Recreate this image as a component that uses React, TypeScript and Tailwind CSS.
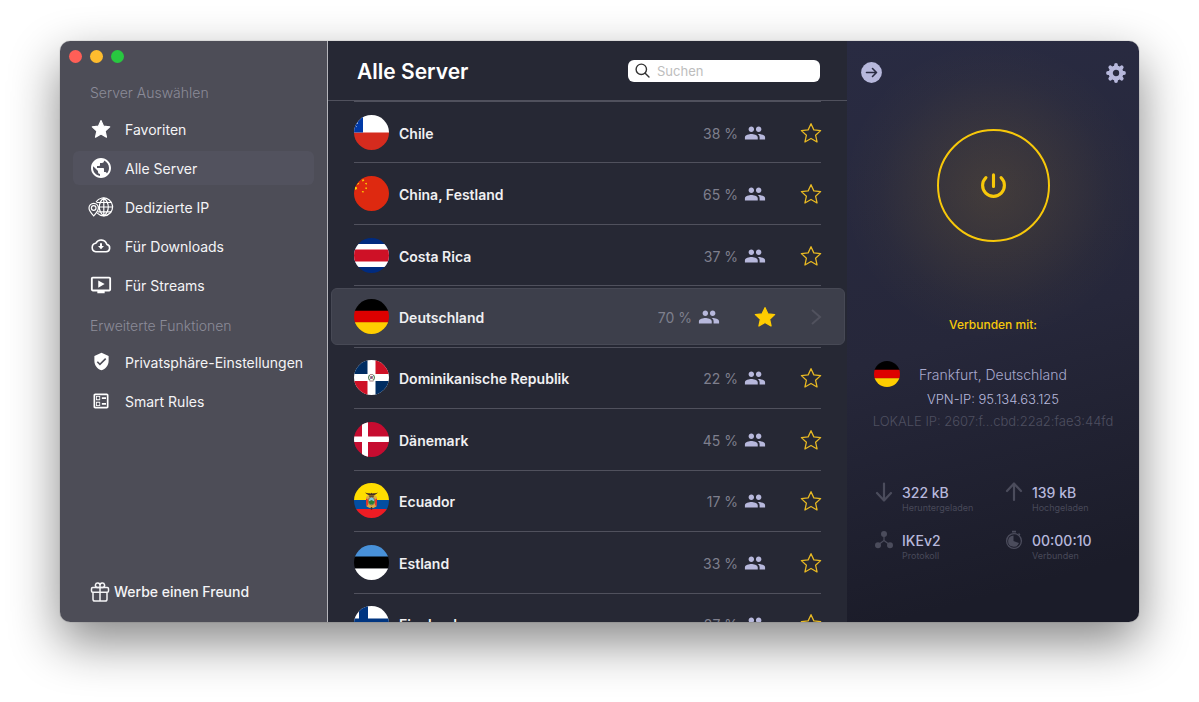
import React, { useState } from 'react';
import { MdGroup, MdOndemandVideo, MdOutlineBallot, MdPublic, MdVerifiedUser } from 'react-icons/md';

interface Server {
  id: string;
  name: string;
  load: number;
}

const SERVERS: Server[] = [
  { id: 'cl', name: 'Chile', load: 38 },
  { id: 'cn', name: 'China, Festland', load: 65 },
  { id: 'cr', name: 'Costa Rica', load: 37 },
  { id: 'de', name: 'Deutschland', load: 70 },
  { id: 'do', name: 'Dominikanische Republik', load: 22 },
  { id: 'dk', name: 'Dänemark', load: 45 },
  { id: 'ec', name: 'Ecuador', load: 17 },
  { id: 'ee', name: 'Estland', load: 33 },
  { id: 'fi', name: 'Finnland', load: 27 },
];

const STAR = 'M12 1.8l3.1 6.8 7.4.8-5.5 5 1.6 7.4-6.6-3.8-6.6 3.8 1.6-7.4-5.5-5 7.4-.8z';

const Star = ({ filled, className }: { filled?: boolean; className: string }) => (
  <svg
    className={className}
    viewBox="0 0 24 24"
    fill={filled ? 'currentColor' : 'none'}
    stroke="currentColor"
    strokeWidth="1.4"
    strokeLinejoin="round"
  >
    <path d={STAR} />
  </svg>
);

/* Sidebar icons */

const DedicatedIcon = () => (
  <svg className="w-[26px] h-[20px]" viewBox="0 0 26 20" fill="none" stroke="currentColor" strokeWidth="1.2">
    <path d="M8 5a9 9 0 1 1 1.2 11.2" />
    <path d="M15.8 1c-6 5-6 13 0 18M15.8 1c6 5 6 13 0 18M15.8 1v18M10 10h15M8.5 5.5h15M9.5 14.8h14" />
    <path d="M5.7 18.8C3.5 16.5 1 14 1 11a4.7 4.7 0 0 1 9.4 0c0 3-2.5 5.5-4.7 7.8z" />
    <circle cx="5.7" cy="11" r="2.3" />
  </svg>
);

const CloudIcon = () => (
  <svg className="w-5 h-5" viewBox="0 0 20 20" fill="none" stroke="currentColor" strokeWidth="1.6" strokeLinejoin="round">
    <path d="M4.800 15.700h10.300a3.700 3.700 0 0 0 .7-7.300A5.900 5.900 0 0 0 4.900 7.200a4.300 4.300 0 0 0-.1 8.500z" />
    <path d="M10 7.200v4" strokeWidth="2" />
    <path d="M7 10h6l-3 3.300z" fill="currentColor" stroke="none" />
  </svg>
);

const GiftIcon = () => (
  <svg className="w-5 h-5" viewBox="0 0 20 20" fill="none" stroke="currentColor" strokeWidth="1.5" strokeLinejoin="round">
    <rect x="1.5" y="5.5" width="17" height="4.7" rx="1.2" />
    <path d="M3 10.200v7a1.800 1.800 0 0 0 1.800 1.800h10.400a1.800 1.800 0 0 0 1.800-1.800v-7M10 5.500V19" />
    <path d="M10 5.500H7A2.300 2.300 0 1 1 10 3.200zM10 5.500h3a2.300 2.300 0 1 0-3-2.300z" />
  </svg>
);

/* Flags, drawn on a 35x35 canvas and clipped to a circle by the wrapper */

const FLAGS: Record<string, React.ReactNode> = {
  cl: (
    <>
      <path fill="#fff" d="M0 0h35v18H0z" />
      <path fill="#d52b1e" d="M0 17.500h35V35H0z" />
      <path fill="#0039a6" d="M0 0h9v17.500H0z" />
      <path fill="#fff" d="M1 11l1 .8L3 11l-.4 1.200zM3 7.500l1.200.6-1 .8z" />
    </>
  ),
  cn: (
    <>
      <path fill="#de2910" d="M0 0h35v35H0z" />
      <g fill="#ffde00">
        <path d="M1 10.500l1 .7 1-.4-.3 1.200.6 1.200H2l-1 .8zM3.300 7.800l2-1.300-.3 1.200-1.500 1.300z" />
        <path d="M7.700 3.400l1 .4.8-.8.200 1.300.8.5-1 .3-.8.7-.3-1zM11 7.300l1.400-.6.6 1-.8 1zM11 12l1.300-.7.8 1-1 1zM7.700 15.600l1.300-.6 1 .8-1 1z" />
      </g>
    </>
  ),
  cr: (
    <>
      <path fill="#002b7f" d="M0 0h35v35H0z" />
      <path fill="#fff" d="M0 6h35v23H0z" />
      <path fill="#ce1126" d="M0 11.500h35v12H0z" />
    </>
  ),
  de: (
    <>
      <path d="M0 0h35v12H0z" />
      <path fill="#d00" d="M0 11.700h35v12H0z" />
      <path fill="#ffce00" d="M0 23.300h35V35H0z" />
    </>
  ),
  do: (
    <>
      <path fill="#fff" d="M0 0h35v35H0z" />
      <path fill="#002d62" d="M0 0h13.500v14H0zM21.500 21H35v14H21.500z" />
      <path fill="#ce1126" d="M21.500 0H35v14H21.500zM0 21h13.500v14H0z" />
      <path fill="none" stroke="#5f8560" strokeWidth="1.200" d="M15.800 15a3.200 3.200 0 0 0 .3 5.300M19.200 15a3.200 3.200 0 0 1-.3 5.300" />
      <path fill="#ce1126" d="M16.300 16.200h1.200v1.300h-1.200zM17.500 17.500h1.200v1.300h-1.200z" />
      <path fill="#002d62" d="M17.500 16.200h1.200v1.300h-1.200zM16.300 17.500h1.200v1.300h-1.200z" />
      <path stroke="#8a5a5a" strokeWidth=".8" d="M15.500 21h4M16 14.600h3" />
    </>
  ),
  dk: (
    <>
      <path fill="#c60c30" d="M0 0h35v35H0z" />
      <path fill="#fff" d="M8 0h6v35H8zM0 14.500h35v5.500H0z" />
    </>
  ),
  ec: (
    <>
      <path fill="#fd0" d="M0 0h35v18H0z" />
      <path fill="#034ea2" d="M0 17h35v10H0z" />
      <path fill="#ed1c24" d="M0 26h35v9H0z" />
      <path fill="#452c25" d="M17.500 12.500c-1.500 0-4.500-.5-6.500-3 2.500 1 4 .6 6 1 .4-1 .9-1 1.300 0 2-.4 3.700 0 5.700-1-2 2.500-5 3-6.500 3z" />
      <path fill="#dca842" d="M12 14l2-1.500h7l2 1.500-.6 9.500-3 1.500h-3.800l-3-1.500z" />
      <path fill="#ed1c24" d="M12 15.500l1.800 1V22l-1.300 1.500zM23 15.500l-1.800 1V22l1.300 1.500z" />
      <path fill="#452c25" d="M14.500 12.500h6l-1 1.200h-4zM16.800 24h1.400v2.800h-1.400z" />
      <ellipse cx="17.500" cy="18" rx="3.200" ry="4" fill="#7fc8e0" stroke="#8a5a1c" strokeWidth=".7" />
      <path fill="#2e7d32" d="M14.600 18.500l2.900-1.500 3 1.500c-.2 2-1.500 3-3 3s-2.700-1-2.900-3z" />
    </>
  ),
  ee: (
    <>
      <path fill="#4891d9" d="M0 0h35v12H0z" />
      <path d="M0 11.500h35v12H0z" />
      <path fill="#fff" d="M0 23.500h35V35H0z" />
    </>
  ),
  fi: (
    <>
      <path fill="#fff" d="M0 0h35v35H0z" />
      <path fill="#003580" d="M5 0h9v35H5zM0 12.500h35v10H0z" />
    </>
  ),
};

const Flag = ({ id, className }: { id: string; className: string }) => (
  <span className={`block shrink-0 overflow-hidden rounded-full ${className}`}>
    <svg className="w-full h-full" viewBox="0 0 35 35">{FLAGS[id]}</svg>
  </span>
);

/* Sidebar */

interface NavItemProps {
  icon: React.ReactNode;
  label: string;
  active?: boolean;
}

const NavItem: React.FC<NavItemProps> = ({ icon, label, active }) => (
  <li>
    <button
      className={`flex h-[34px] w-full items-center gap-[11px] rounded-md pt-[2px] pl-[15px] text-left text-sm text-[#f4f4f6] ${
        active ? 'bg-[#52525e]' : ''
      }`}
    >
      <span className="flex w-[26px] shrink-0 justify-center pb-[3px] text-white">{icon}</span>
      {label}
    </button>
  </li>
);

const Sidebar = () => (
  <aside className="flex w-[268px] shrink-0 flex-col border-r border-[#b4b4ba] bg-[#4d4d57] pt-[9px] pb-5">
    <div className="flex gap-2 pl-[9px]">
      <button aria-label="Schließen" className="size-[13px] rounded-full bg-[#ff5f57]" />
      <button aria-label="Minimieren" className="size-[13px] rounded-full bg-[#febc2e]" />
      <button aria-label="Vergrößern" className="size-[13px] rounded-full bg-[#28c840]" />
    </div>
    <h2 className="mt-5 pl-[30px] text-sm leading-5 font-light text-[#8b8b98]">Server Auswählen</h2>
    <ul className="mx-[13px] mt-[9px] flex flex-col gap-[5px]">
      <NavItem icon={<Star filled className="size-5" />} label="Favoriten" />
      <NavItem icon={<MdPublic className="size-6" />} label="Alle Server" active />
      <NavItem icon={<DedicatedIcon />} label="Dedizierte IP" />
      <NavItem icon={<CloudIcon />} label="Für Downloads" />
      <NavItem icon={<MdOndemandVideo className="size-[22px]" />} label="Für Streams" />
    </ul>
    <h2 className="mt-[14px] pl-[30px] text-sm leading-5 font-light text-[#8b8b98]">Erweiterte Funktionen</h2>
    <ul className="mx-[13px] mt-[9px] flex flex-col gap-[5px]">
      <NavItem icon={<MdVerifiedUser className="size-[19px]" />} label="Privatsphäre-Einstellungen" />
      <NavItem icon={<MdOutlineBallot className="size-5" />} label="Smart Rules" />
    </ul>
    <button className="mt-auto flex items-center gap-1 pl-[30px] text-sm font-medium text-[#f4f4f6]">
      <GiftIcon />
      Werbe einen Freund
    </button>
  </aside>
);

/* Server list */

interface ServerRowProps {
  server: Server;
  selected: boolean;
  favorite: boolean;
  onToggle: () => void;
}

const ServerRow: React.FC<ServerRowProps> = ({ server, selected, favorite, onToggle }) => (
  <li className="flex min-h-0 flex-col">
    <div
      className={`ml-[3px] mr-[2px] my-[2px] flex min-h-0 flex-1 items-center rounded-md border pr-[22px] pl-[22px] ${
        selected ? 'border-[#474955] bg-[#3d3f4b]' : 'border-transparent'
      }`}
    >
      <Flag id={server.id} className="size-[35px]" />
      <div className="ml-[10px] flex flex-1 items-center pt-px">
        <span className="flex-1 pt-[2px] text-sm font-semibold text-[#f0f0f2]">{server.name}</span>
        <span className="pt-[2px] text-sm text-[#7e7f8d]">{server.load} %</span>
        <MdGroup className="ml-[6px] size-[22px] text-[#b7b8dc]" />
        <button aria-label={`${server.name} als Favorit`} onClick={onToggle} className="ml-[34px]">
          <Star filled={favorite} className={favorite ? 'size-[22px] text-[#ffcc00]' : 'size-[22px] text-[#e8b923]'} />
        </button>
      </div>
      {selected && (
        <button aria-label="Standorte anzeigen" className="ml-[34px] text-[#51525e]">
          <svg className="h-4 w-3" viewBox="0 0 12 16" fill="none" stroke="currentColor" strokeWidth="2">
            <path d="M2 1l8 7-8 7" />
          </svg>
        </button>
      )}
    </div>
    <div className="mx-[26px] h-px shrink-0 bg-[#50515d]" />
  </li>
);

const ServerList = () => {
  const [favorites, setFavorites] = useState<string[]>(['de']);

  const toggle = (id: string) =>
    setFavorites((ids) => (ids.includes(id) ? ids.filter((i) => i !== id) : [...ids, id]));

  return (
    <main className="flex min-w-0 flex-1 flex-col bg-[#262834]">
      <header className="flex h-[60px] shrink-0 items-center justify-between border-b border-[#50515d] pr-[27px] pl-[29px]">
        <h1 className="pt-[2px] text-[21px] font-semibold text-white">Alle Server</h1>
        <label className="flex h-[22px] w-[192px] items-center gap-[7px] rounded-md bg-white pl-[7px]">
          <svg className="size-[15px] shrink-0" viewBox="0 0 15 15" fill="none" stroke="#333" strokeWidth="1.4" strokeLinecap="round">
            <circle cx="6.3" cy="6.3" r="5.2" />
            <path d="M10.200 10.200l3.800 3.800" />
          </svg>
          <input
            type="search"
            aria-label="Suchen"
            placeholder="Suchen"
            className="w-full bg-transparent text-[13px] leading-4 text-[#333] outline-none placeholder:text-[#bdbdbd]"
          />
        </label>
      </header>
      <div className="min-h-0 flex-1 overflow-hidden">
        <div className="mx-[26px] h-px bg-[#50515d]" />
        <ul className="grid h-[553px] grid-rows-9">
          {SERVERS.map((server) => (
            <ServerRow
              key={server.id}
              server={server}
              selected={server.id === 'de'}
              favorite={favorites.includes(server.id)}
              onToggle={() => toggle(server.id)}
            />
          ))}
        </ul>
      </div>
    </main>
  );
};

/* Connection panel */

const GearIcon = () => (
  <svg className="size-5" viewBox="0 0 20 20" fill="none" stroke="currentColor">
    <circle cx="10" cy="10" r="5.3" strokeWidth="4.2" />
    <path
      strokeWidth="3.8"
      strokeLinecap="round"
      d="M10 2v1.500M10 16.500V18M2 10h1.500M16.500 10H18M4.300 4.300l1 1M14.700 14.700l1 1M15.700 4.300l-1 1M5.300 14.700l-1 1"
    />
  </svg>
);

const ProtocolIcon = () => (
  <svg className="size-5" viewBox="0 0 20 20" fill="currentColor">
    <path fill="none" stroke="currentColor" strokeWidth="1.2" d="M10 4v6.500L4 15M10 10.500l6 4.500" />
    <circle cx="10" cy="4" r="3" />
    <circle cx="4" cy="15.3" r="3" />
    <circle cx="16" cy="15.3" r="3" />
  </svg>
);

const TimerIcon = () => (
  <svg className="size-5" viewBox="0 0 20 20" fill="currentColor">
    <path d="M8 .8h4v1.600H8zM15 3l1.500 1.500-1 .8-1.400-1.300z" />
    <circle cx="10" cy="11" r="7.4" fill="none" stroke="currentColor" strokeWidth="1.3" />
    <path d="M9.500 5.500V11l5.500 2A5.600 5.600 0 1 1 9.500 5.500z" />
  </svg>
);

const ArrowIcon = ({ up }: { up?: boolean }) => (
  <svg className="size-5" viewBox="0 0 20 20" fill="none" stroke="currentColor" strokeWidth="2.2" strokeLinecap="round" strokeLinejoin="round">
    <path d={up ? 'M10 18V2M3 9l7-7.500L17 9' : 'M10 1.500v16M3 11l7 7.500L17 11'} />
  </svg>
);

const Stat = ({ icon, value, label }: { icon: React.ReactNode; value: string; label: string }) => (
  <div className="flex gap-2">
    <span className="text-[#4b4c5c]">{icon}</span>
    <div className="pt-px">
      <p className="text-sm leading-5 font-medium text-[#b7b8dc]">{value}</p>
      <p className="text-[9px] leading-[10px] text-[#484959]">{label}</p>
    </div>
  </div>
);

const ConnectionPanel = () => (
  <section className="flex w-[292px] shrink-0 flex-col bg-[radial-gradient(circle_at_146px_150px,rgba(255,190,40,0.13)_0px,rgba(255,190,40,0.07)_65px,rgba(255,190,40,0.02)_115px,rgba(255,190,40,0)_150px),linear-gradient(165deg,#292b42_0%,#26273a_50%,#1b1c29_90%)]">
    <div className="flex justify-between pt-[21px] pr-[13px] pl-[14px] text-[#b7b8dc]">
      <button aria-label="Einklappen">
        <svg className="size-[21px]" viewBox="0 0 21 21" fill="none">
          <circle cx="10.5" cy="10.5" r="10.4" fill="currentColor" />
          <path stroke="#292b42" strokeWidth="1.6" strokeLinecap="round" strokeLinejoin="round" d="M5.500 10.500h10M11.500 6.500l4 4-4 4" />
        </svg>
      </button>
      <button aria-label="Einstellungen">
        <GearIcon />
      </button>
    </div>
    <button
      aria-label="Verbindung trennen"
      className="mx-auto mt-[46px] flex size-[113px] items-center justify-center rounded-full border-2 border-[#f7c80a] text-[#f7c80a]"
    >
      <svg className="size-[27px]" viewBox="0 0 26 26" fill="none" stroke="currentColor" strokeWidth="3" strokeLinecap="round">
        <path d="M13 2.800v11.200M5.700 5.400A10.500 10.500 0 1 0 20.300 5.400" />
      </svg>
    </button>
    <p className="mt-[75px] text-center text-xs leading-4 font-medium text-[#f7c80a]">Verbunden mit:</p>
    <div className="mt-7 grid grid-cols-[26px_1fr_26px] items-center px-[27px]">
      <Flag id="de" className="size-[26px]" />
      <p className="pt-[2px] text-center text-sm font-light whitespace-nowrap text-[#a7a8cc]">Frankfurt, Deutschland</p>
    </div>
    <p className="mt-px text-center text-[13px] leading-[22px] font-light text-[#b7b8dc]">VPN-IP: 95.134.63.125</p>
    <p className="text-center text-[13px] leading-[22px] font-light whitespace-nowrap text-[#4e4f60]">
      LOKALE IP: 2607:f...cbd:22a2:fae3:44fd
    </p>
    <div className="mt-[50px] grid grid-cols-2 gap-y-[17px] pr-[5px] pl-[27px]">
      <Stat icon={<ArrowIcon />} value="322 kB" label="Heruntergeladen" />
      <Stat icon={<ArrowIcon up />} value="139 kB" label="Hochgeladen" />
      <Stat icon={<ProtocolIcon />} value="IKEv2" label="Protokoll" />
      <Stat icon={<TimerIcon />} value="00:00:10" label="Verbunden" />
    </div>
  </section>
);

export default function App() {
  return (
    <div className="flex h-screen bg-white px-[60px] pt-[41px] pb-20 font-['Inter','Liberation_Sans',sans-serif]">
      <div className="flex min-w-0 flex-1 overflow-hidden rounded-[10px] shadow-[0_0_1px_rgba(0,0,0,0.6),0_20px_50px_rgba(0,0,0,0.48)]">
        <Sidebar />
        <ServerList />
        <ConnectionPanel />
      </div>
    </div>
  );
}
